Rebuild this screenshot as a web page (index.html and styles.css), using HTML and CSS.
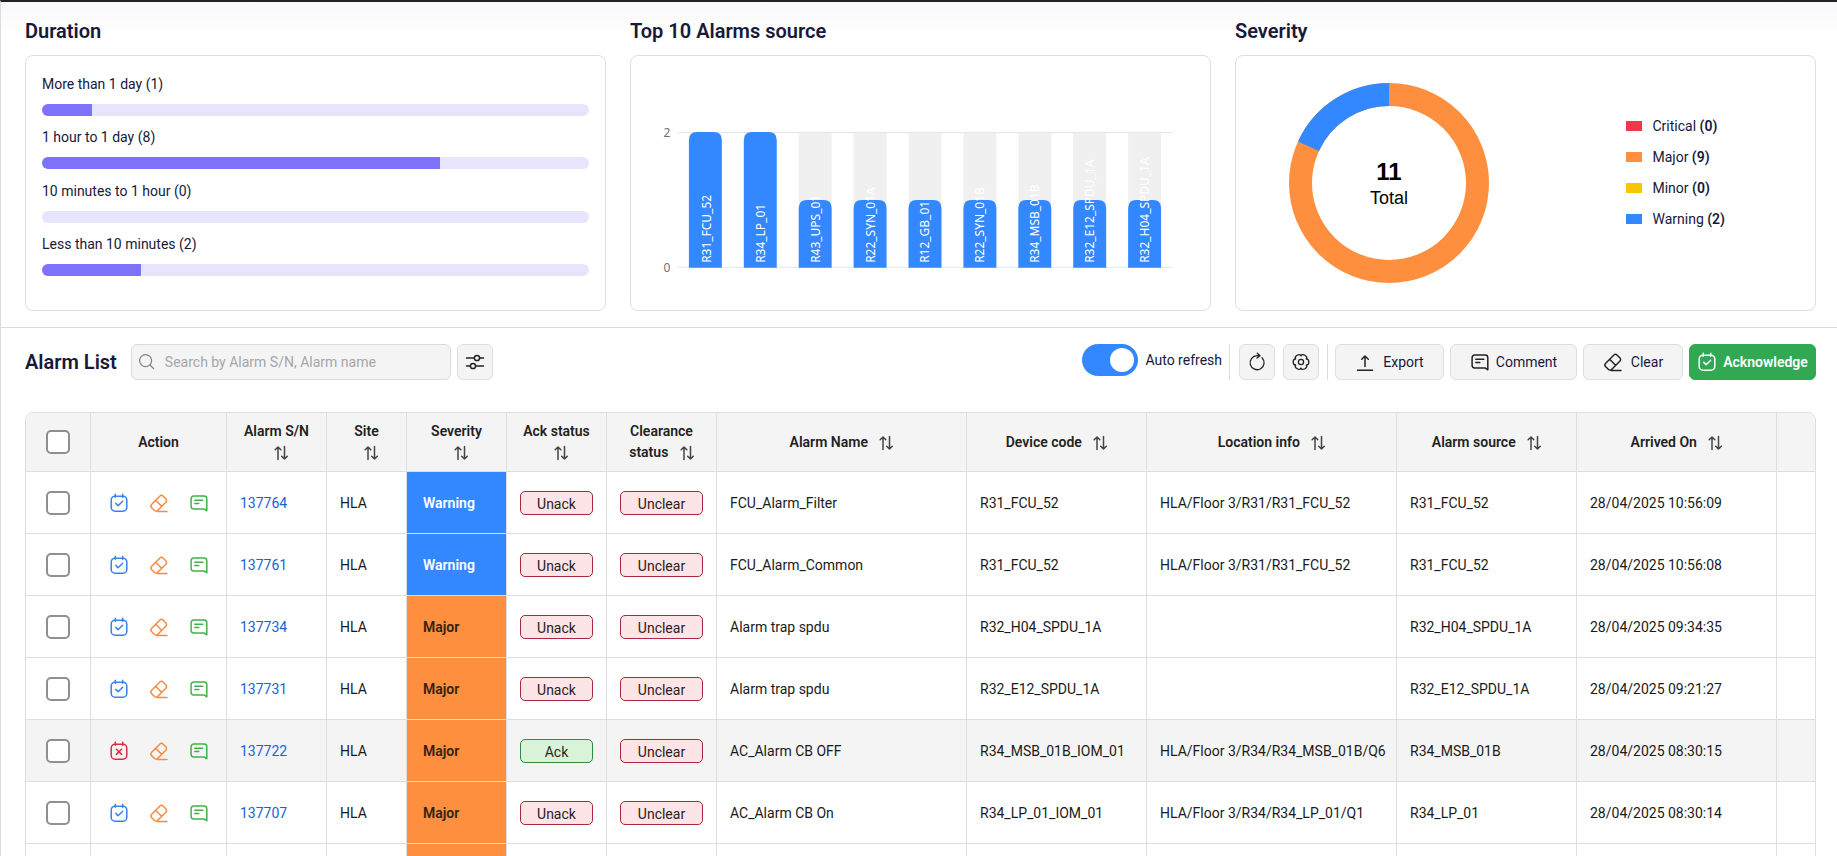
FILE: index.html
```html
<!DOCTYPE html>
<html lang="en">
<head>
<meta charset="utf-8">
<title>Alarm List</title>
<link rel="stylesheet" href="styles.css">
</head>
<body>
<svg class="sprite" aria-hidden="true">
  <symbol id="i-ack" viewBox="0 0 20 20"><rect x="2.2" y="3.2" width="15.6" height="15" rx="3.8"/><path d="M6.3 1.2v3M13.7 1.2v3M6.8 10.4l2.3 2.3 4.6-4.4"/></symbol>
  <symbol id="i-unack" viewBox="0 0 20 20"><rect x="2.2" y="3.2" width="15.6" height="15" rx="3.8"/><path d="M6.3 1.2v3M13.7 1.2v3M7.4 8.2l5.2 5.2M12.6 8.2l-5.2 5.2"/></symbol>
  <symbol id="i-erase" viewBox="0 0 20 20"><path d="M2.700 11.200 10.700 3.200c1-1 2.500-1 3.500 0l2.600 2.600c1 1 1 2.500 0 3.500l-8 8c-1 1-2.500 1-3.500 0l-2.600-2.600c-1-1-1-2.500 0-3.500zM6.600 7.300l6 6M8 18.500h10"/></symbol>
  <symbol id="i-note" viewBox="0 0 20 20"><path d="M17.800 17.800l-2.700-1.900H4.700a2.600 2.600 0 0 1-2.600-2.600V5.700a2.600 2.600 0 0 1 2.600-2.600h10.500a2.600 2.600 0 0 1 2.600 2.600zM5.800 7.200h8M5.800 10.500h4"/></symbol>
  <symbol id="i-sort" viewBox="0 0 14 16"><path d="M4 14.500V2M1.200 4.800 4 2l2.800 2.800M10.500 1.500V14M7.700 11.200l2.800 2.800 2.800-2.800"/></symbol>
</svg>
<div class="app">
  <section class="summary">
    <div class="panel">
      <h2>Duration</h2>
      <div class="card durations">
        <div class="duration"><span>More than 1 day (1)</span><div class="track"><div class="fill" style="width:9.09%"></div></div></div>
        <div class="duration"><span>1 hour to 1 day (8)</span><div class="track"><div class="fill" style="width:72.73%"></div></div></div>
        <div class="duration"><span>10 minutes to 1 hour (0)</span><div class="track"></div></div>
        <div class="duration"><span>Less than 10 minutes (2)</span><div class="track"><div class="fill" style="width:18.18%"></div></div></div>
      </div>
    </div>
    <div class="panel">
      <h2>Top 10 Alarms source</h2>
      <div class="card">
        <svg class="chart" viewBox="0 0 580 254" role="img" aria-label="Top 10 alarms source">
          <g class="shade"><rect x="168" y="77" width="33" height="135"/><rect x="223" y="77" width="33" height="135"/><rect x="278" y="77" width="33" height="135"/><rect x="333" y="77" width="33" height="135"/><rect x="388" y="77" width="33" height="135"/><rect x="443" y="77" width="33" height="135"/><rect x="498" y="77" width="33" height="135"/></g>
          <path class="grid" d="M47 76.500h495M47 211.500h495"/>
          <g class="bars">
            <path d="M58 212V84q0-8 8-8h17q8 0 8 8v128z"/><path d="M113 212V84q0-8 8-8h17q8 0 8 8v128z"/>
            <path d="M168 212v-60q0-8 8-8h17q8 0 8 8v60z"/><path d="M223 212v-60q0-8 8-8h17q8 0 8 8v60z"/><path d="M278 212v-60q0-8 8-8h17q8 0 8 8v60z"/><path d="M333 212v-60q0-8 8-8h17q8 0 8 8v60z"/><path d="M388 212v-60q0-8 8-8h17q8 0 8 8v60z"/><path d="M443 212v-60q0-8 8-8h17q8 0 8 8v60z"/><path d="M498 212v-60q0-8 8-8h17q8 0 8 8v60z"/>
          </g>
          <g class="bar-labels">
            <text transform="translate(80 207) rotate(-90)">R31_FCU_52</text><text transform="translate(134 207) rotate(-90)">R34_LP_01</text><text transform="translate(189 207) rotate(-90)">R43_UPS_01</text><text transform="translate(244 207) rotate(-90)">R22_SYN_01A</text><text transform="translate(299 207) rotate(-90)">R12_GB_01</text><text transform="translate(354 207) rotate(-90)">R22_SYN_01B</text><text transform="translate(409 207) rotate(-90)">R34_MSB_01B</text><text transform="translate(464 207) rotate(-90)">R32_E12_SPDU_1A</text><text transform="translate(519 207) rotate(-90)">R32_H04_SPDU_1A</text>
          </g>
          <g class="axis"><text x="36" y="81">2</text><text x="36" y="216">0</text></g>
        </svg>
      </div>
    </div>
    <div class="panel">
      <h2>Severity</h2>
      <div class="card severity">
        <svg class="donut" viewBox="0 0 200 200" role="img" aria-label="Total 11">
          <circle class="ring major" cx="100" cy="100" r="88.500"/>
          <circle class="ring warning" cx="100" cy="100" r="88.500" pathLength="11" stroke-dasharray="2 9" transform="rotate(-155.450 100 100)"/>
          <text class="total" x="100" y="97">11</text><text class="total-label" x="100" y="121">Total</text>
        </svg>
        <ul class="legend">
          <li><i class="swatch critical"></i><span>Critical <b>(0)</b></span></li>
          <li><i class="swatch major"></i><span>Major <b>(9)</b></span></li>
          <li><i class="swatch minor"></i><span>Minor <b>(0)</b></span></li>
          <li><i class="swatch warning"></i><span>Warning <b>(2)</b></span></li>
        </ul>
      </div>
    </div>
  </section>

  <section class="list">
    <div class="toolbar">
      <h2>Alarm List</h2>
      <label class="search">
        <svg class="icon thin" viewBox="0 0 20 20"><circle cx="8.600" cy="8.600" r="6"/><path d="M13 13l3.500 3.500"/></svg>
        <input type="search" placeholder="Search by Alarm S/N, Alarm name" aria-label="Search alarms">
      </label>
      <button class="btn square" aria-label="Filters"><svg class="icon" viewBox="0 0 20 20"><path d="M1.500 6h7.500M15 6h3.500M1.500 14h3.500M11 14h7.500"/><circle cx="12" cy="6" r="2.600"/><circle cx="8" cy="14" r="2.600"/></svg></button>
      <div class="tools">
        <label class="refresh"><input class="switch" type="checkbox" role="switch" checked><span>Auto refresh</span></label>
        <div class="group">
          <button class="btn square" aria-label="Refresh"><svg class="icon thin" viewBox="0 0 20 20"><path d="M15 5.700a7 7 0 1 1-5-2h2.800M10.300 1.200l2.700 2.500-3 2.300"/></svg></button>
          <button class="btn square" aria-label="Settings"><svg class="icon thin" viewBox="0 0 20 20"><circle cx="10" cy="10" r="2.600"/><path id="cog" d="M15.460 6.850C18.600 7 18.600 13 15.460 13.150"/><use href="#cog" transform="rotate(60 10 10)"/><use href="#cog" transform="rotate(120 10 10)"/><use href="#cog" transform="rotate(180 10 10)"/><use href="#cog" transform="rotate(240 10 10)"/><use href="#cog" transform="rotate(300 10 10)"/></svg></button>
        </div>
        <div class="actions">
          <button class="btn export"><svg class="icon" viewBox="0 0 20 20"><path d="M10 14.500V4M6.700 7.300 10 4l3.300 3.300M2.500 18.300h15"/></svg>Export</button>
          <button class="btn comment"><svg class="icon"><use href="#i-note"/></svg>Comment</button>
          <button class="btn clear"><svg class="icon"><use href="#i-erase"/></svg>Clear</button>
          <button class="btn primary"><svg class="icon"><use href="#i-ack"/></svg>Acknowledge</button>
        </div>
      </div>
    </div>

    <div class="table-wrap">
      <table>
        <colgroup><col class="w-check"><col class="w-action"><col class="w-100"><col class="w-80"><col class="w-100"><col class="w-100"><col class="w-110"><col class="w-250"><col class="w-180"><col class="w-250"><col class="w-180"><col class="w-200"><col></colgroup>
        <thead><tr>
          <th><input type="checkbox" aria-label="Select all"></th><th>Action</th>
          <th>Alarm S/N<br><svg class="sort"><use href="#i-sort"/></svg></th>
          <th>Site<br><svg class="sort"><use href="#i-sort"/></svg></th>
          <th>Severity<br><svg class="sort"><use href="#i-sort"/></svg></th>
          <th>Ack status<br><svg class="sort"><use href="#i-sort"/></svg></th>
          <th>Clearance status <svg class="sort"><use href="#i-sort"/></svg></th>
          <th>Alarm Name <svg class="sort"><use href="#i-sort"/></svg></th>
          <th>Device code <svg class="sort"><use href="#i-sort"/></svg></th>
          <th>Location info <svg class="sort"><use href="#i-sort"/></svg></th>
          <th>Alarm source <svg class="sort"><use href="#i-sort"/></svg></th>
          <th>Arrived On <svg class="sort"><use href="#i-sort"/></svg></th><th></th>
        </tr></thead>
        <tbody>
          <tr><td><input type="checkbox" aria-label="Select 137764"></td><td><div class="row-actions"><button class="blue" aria-label="Acknowledge"><svg class="icon"><use href="#i-ack"/></svg></button><button class="orange" aria-label="Clear"><svg class="icon"><use href="#i-erase"/></svg></button><button class="green" aria-label="Comment"><svg class="icon"><use href="#i-note"/></svg></button></div></td><td><a href="#">137764</a></td><td>HLA</td><td class="sev warning">Warning</td><td><span class="pill bad">Unack</span></td><td><span class="pill bad">Unclear</span></td><td>FCU_Alarm_Filter</td><td>R31_FCU_52</td><td>HLA/Floor 3/R31/R31_FCU_52</td><td>R31_FCU_52</td><td>28/04/2025 10:56:09</td><td></td></tr>
          <tr><td><input type="checkbox" aria-label="Select 137761"></td><td><div class="row-actions"><button class="blue" aria-label="Acknowledge"><svg class="icon"><use href="#i-ack"/></svg></button><button class="orange" aria-label="Clear"><svg class="icon"><use href="#i-erase"/></svg></button><button class="green" aria-label="Comment"><svg class="icon"><use href="#i-note"/></svg></button></div></td><td><a href="#">137761</a></td><td>HLA</td><td class="sev warning">Warning</td><td><span class="pill bad">Unack</span></td><td><span class="pill bad">Unclear</span></td><td>FCU_Alarm_Common</td><td>R31_FCU_52</td><td>HLA/Floor 3/R31/R31_FCU_52</td><td>R31_FCU_52</td><td>28/04/2025 10:56:08</td><td></td></tr>
          <tr><td><input type="checkbox" aria-label="Select 137734"></td><td><div class="row-actions"><button class="blue" aria-label="Acknowledge"><svg class="icon"><use href="#i-ack"/></svg></button><button class="orange" aria-label="Clear"><svg class="icon"><use href="#i-erase"/></svg></button><button class="green" aria-label="Comment"><svg class="icon"><use href="#i-note"/></svg></button></div></td><td><a href="#">137734</a></td><td>HLA</td><td class="sev major">Major</td><td><span class="pill bad">Unack</span></td><td><span class="pill bad">Unclear</span></td><td>Alarm trap spdu</td><td>R32_H04_SPDU_1A</td><td></td><td>R32_H04_SPDU_1A</td><td>28/04/2025 09:34:35</td><td></td></tr>
          <tr><td><input type="checkbox" aria-label="Select 137731"></td><td><div class="row-actions"><button class="blue" aria-label="Acknowledge"><svg class="icon"><use href="#i-ack"/></svg></button><button class="orange" aria-label="Clear"><svg class="icon"><use href="#i-erase"/></svg></button><button class="green" aria-label="Comment"><svg class="icon"><use href="#i-note"/></svg></button></div></td><td><a href="#">137731</a></td><td>HLA</td><td class="sev major">Major</td><td><span class="pill bad">Unack</span></td><td><span class="pill bad">Unclear</span></td><td>Alarm trap spdu</td><td>R32_E12_SPDU_1A</td><td></td><td>R32_E12_SPDU_1A</td><td>28/04/2025 09:21:27</td><td></td></tr>
          <tr class="acked"><td><input type="checkbox" aria-label="Select 137722"></td><td><div class="row-actions"><button class="red" aria-label="Unacknowledge"><svg class="icon"><use href="#i-unack"/></svg></button><button class="orange" aria-label="Clear"><svg class="icon"><use href="#i-erase"/></svg></button><button class="green" aria-label="Comment"><svg class="icon"><use href="#i-note"/></svg></button></div></td><td><a href="#">137722</a></td><td>HLA</td><td class="sev major">Major</td><td><span class="pill good">Ack</span></td><td><span class="pill bad">Unclear</span></td><td>AC_Alarm CB OFF</td><td>R34_MSB_01B_IOM_01</td><td>HLA/Floor 3/R34/R34_MSB_01B/Q6</td><td>R34_MSB_01B</td><td>28/04/2025 08:30:15</td><td></td></tr>
          <tr><td><input type="checkbox" aria-label="Select 137707"></td><td><div class="row-actions"><button class="blue" aria-label="Acknowledge"><svg class="icon"><use href="#i-ack"/></svg></button><button class="orange" aria-label="Clear"><svg class="icon"><use href="#i-erase"/></svg></button><button class="green" aria-label="Comment"><svg class="icon"><use href="#i-note"/></svg></button></div></td><td><a href="#">137707</a></td><td>HLA</td><td class="sev major">Major</td><td><span class="pill bad">Unack</span></td><td><span class="pill bad">Unclear</span></td><td>AC_Alarm CB On</td><td>R34_LP_01_IOM_01</td><td>HLA/Floor 3/R34/R34_LP_01/Q1</td><td>R34_LP_01</td><td>28/04/2025 08:30:14</td><td></td></tr>
          <tr><td></td><td></td><td></td><td></td><td class="sev major"></td><td></td><td></td><td></td><td></td><td></td><td></td><td></td><td></td></tr>
        </tbody>
      </table>
    </div>
  </section>
</div>
</body>
</html>
```
FILE: styles.css
```css
* { box-sizing: border-box; }
body {
  margin: 0;
  overflow: hidden;
  font-family: Roboto, "Noto Sans", sans-serif;
  font-size: 14px;
  line-height: 20px;
  color: #1a1a1a;
}
button, input { font: inherit; color: inherit; }
.sprite { display: none; }
.app {
  height: 100vh;
  overflow: hidden;
  border-top: 2px solid #222226;
  border-left: 1px solid #d9dbde;
  background: linear-gradient(#f8f8fa, #fff 36px);
}
h2 { margin: 0; font-size: 20px; line-height: 28px; font-weight: 600; color: #16193a; }
.icon {
  width: 20px; height: 20px; flex: none;
  fill: none; stroke: currentColor; stroke-width: 1.5;
  stroke-linecap: round; stroke-linejoin: round;
}
.thin { stroke-width: 1.3; }

.summary {
  display: grid; grid-template-columns: repeat(3, 1fr); gap: 24px;
  padding: 15px 21px 16px 24px;
  border-bottom: 1px solid #d9dbde;
}
.card {
  height: 256px; margin-top: 10px;
  border: 1px solid #dcdee0; border-radius: 8px; background: #fff;
}
.durations {
  display: flex; flex-direction: column; justify-content: space-between;
  padding: 18px 16px 34px; color: #16193a;
}
.duration { display: flex; flex-direction: column; gap: 10px; }
.track { height: 12px; border-radius: 6px; overflow: hidden; background: #e7e4fd; }
.fill { height: 12px; background: #7e73f8; }

.chart { display: block; width: 100%; height: 100%; }
.shade { fill: #f0f0f0; }
.grid { stroke: #e0e6f1; }
.bars { fill: #3388ff; }
.bar-labels { fill: #fff; font-family: "Noto Sans", sans-serif; font-size: 12px; }
.axis { fill: #6e7079; font-family: "Noto Sans", sans-serif; font-size: 12px; text-anchor: middle; }

.severity { display: flex; align-items: center; justify-content: space-between; padding: 0 90px 0 53px; }
.donut { width: 200px; height: 200px; flex: none; }
.ring { fill: none; stroke-width: 23; }
.ring.major { stroke: #fd8f3f; }
.ring.warning { stroke: #3388ff; }
.donut text { font-family: "Liberation Sans", Arial, sans-serif; text-anchor: middle; fill: #000; }
.total { font-size: 24px; font-weight: 700; }
.total-label { font-size: 18px; }
.legend {
  display: flex; flex-direction: column; gap: 11px;
  margin: 0 0 22px; padding: 0; list-style: none; color: #16193a;
}
.legend li { display: flex; align-items: center; gap: 10px; }
.legend b { font-weight: 600; }
.swatch { width: 16px; height: 10px; }
.swatch.critical { background: #f0384a; }
.swatch.major { background: #fd8f3f; }
.swatch.minor { background: #f7c600; }
.swatch.warning { background: #3388ff; }

.list { padding: 16px 21px 0 24px; }
.toolbar { display: flex; align-items: center; height: 36px; }
.search {
  display: flex; align-items: center; gap: 8px;
  width: 320px; height: 36px; margin: 0 6px 0 14px; padding: 0 5px;
  border: 1px solid #d9dbde; border-radius: 6px; background: #f4f4f4; color: #80868b;
}
.search input { flex: 1; min-width: 0; padding: 0; border: 0; outline: 0; background: none; }
.search input::placeholder { color: #a3a7ab; opacity: 1; }
.btn {
  display: flex; align-items: center; justify-content: center; gap: 6px;
  height: 36px; padding: 0;
  border: 1px solid #dcdee2; border-radius: 6px; background: #f4f4f4; color: #16193a;
}
.btn .icon { color: #222; }
.square { width: 36px; }
.export { width: 109px; gap: 8px; }
.comment { width: 127px; }
.clear { width: 100px; gap: 8px; }
.primary { width: 127px; border-color: #30a952; background: #30a952; color: #fff; font-weight: 600; }
.primary .icon { color: #fff; }
.tools { display: flex; margin-left: auto; }
.refresh { display: flex; align-items: center; gap: 7px; height: 32px; margin-right: 7px; color: #16193a; }
.switch {
  appearance: none; width: 56px; height: 32px; margin: 0; padding: 4px;
  border-radius: 16px; background: #3388ff;
}
.switch::before { content: ""; display: block; width: 24px; height: 24px; margin-left: auto; border-radius: 50%; background: #fff; }
.group { display: flex; gap: 8px; padding: 0 8px 0 9px; border: solid #d9dbde; border-width: 0 1px; }
.actions { display: flex; gap: 6px; padding-left: 7px; }

.table-wrap { margin-top: 32px; overflow: hidden; border: 1px solid #dcdee2; border-radius: 8px 8px 0 0; }
table { width: 100%; table-layout: fixed; border-spacing: 0; }
.w-check { width: 65px; }
.w-action { width: 136px; }
.w-80 { width: 80px; }
.w-100 { width: 100px; }
.w-110 { width: 110px; }
.w-180 { width: 180px; }
.w-200 { width: 200px; }
.w-250 { width: 250px; }
th, td { padding: 0 13px; border: solid #dcdee2; border-width: 0 1px 1px 0; white-space: nowrap; }
th:last-child, td:last-child { border-right: 0; }
th { height: 59px; padding: 0 8px; background: #f4f4f4; font-weight: 600; line-height: 21px; white-space: normal; color: #222; }
td { height: 62px; }
th:first-child, td:first-child { padding: 0; text-align: center; }
.sort {
  width: 14px; height: 16px; margin-left: 8px; vertical-align: -4px;
  fill: none; stroke: #444; stroke-width: 1.5; stroke-linecap: round; stroke-linejoin: round;
}
td input, th input {
  appearance: none; display: block; width: 24px; height: 24px; margin: 0 auto;
  border: 2px solid #8b9094; border-radius: 5px; background: #fff;
}
.row-actions { display: flex; gap: 20px; padding-left: 5px; }
.row-actions button { display: flex; padding: 0; border: 0; background: none; }
.row-actions .blue { color: #3a80ea; }
.row-actions .orange { color: #f78a41; }
.row-actions .green { color: #43b04a; }
.row-actions .red { color: #d9303e; }
td a { color: #1763d8; text-decoration: none; }
.sev { padding: 0 16px; font-weight: 600; }
.sev.warning { background: #3388ff; color: #fff; }
.sev.major { background: #fd8f3f; color: #33220f; }
.pill { display: block; height: 24px; border: 1px solid; border-radius: 5px; line-height: 24px; text-align: center; }
.bad { border-color: #a8293a; background: #fde5e7; color: #2b2020; }
.good { border-color: #2f8a3c; background: #d9f3d9; color: #1d2b1d; }
.acked td:not(.sev) { background: #f4f4f4; }
```
